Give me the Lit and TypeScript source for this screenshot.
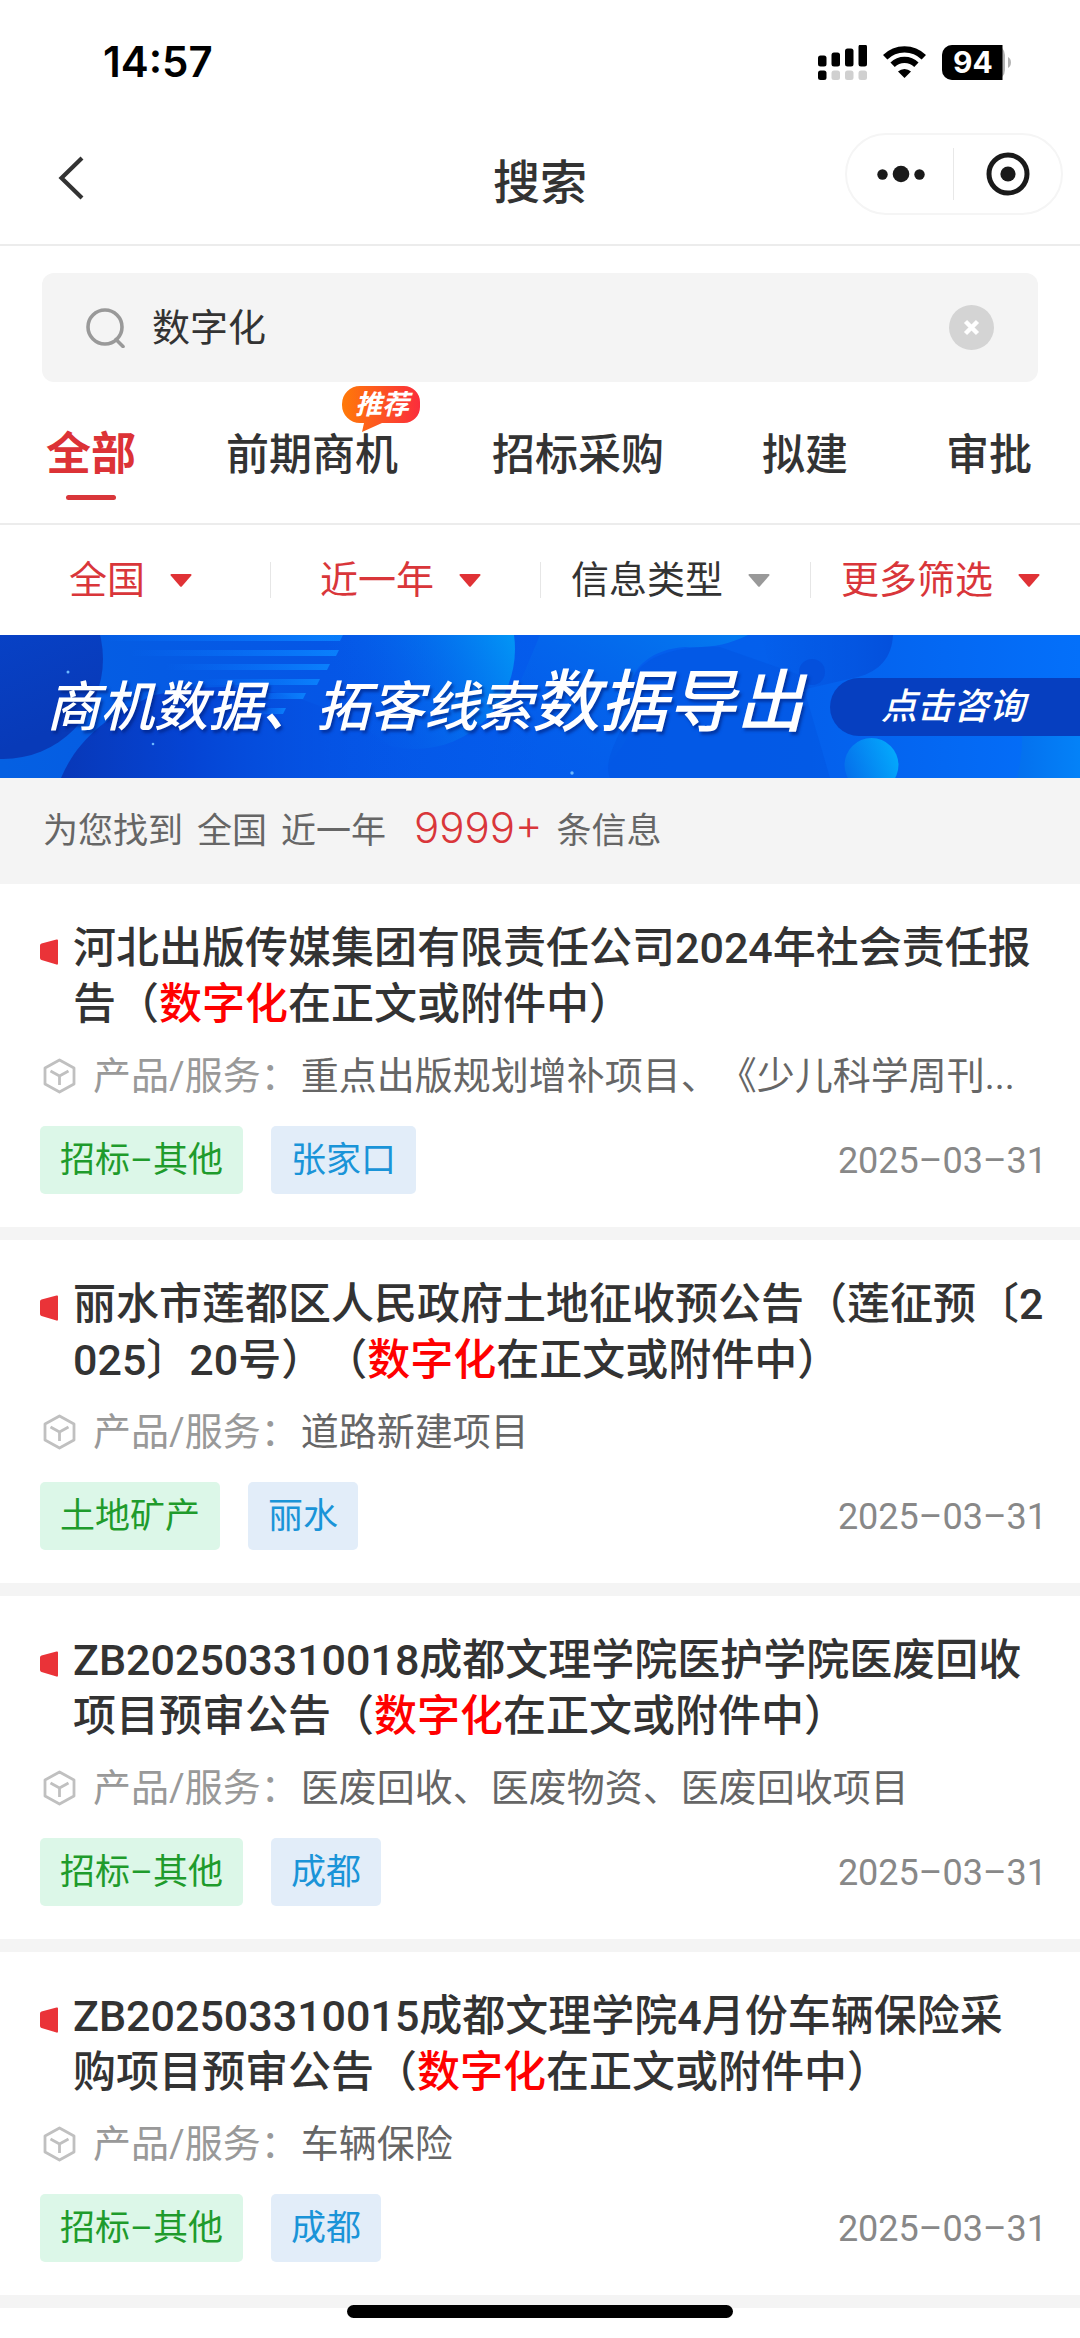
import { LitElement, html, css, svg } from "lit";
import { customElement, property } from "lit/decorators.js";
import { classMap } from "lit/directives/class-map.js";

interface Notice {
  title: string;
  product: string;
  kind: string;
  place: string;
  date: string;
}

const KEYWORD = "数字化";

const TABS = [
  { label: "全部", active: true },
  { label: "前期商机", badge: "推荐" },
  { label: "招标采购" },
  { label: "拟建" },
  { label: "审批" },
];

const FILTERS = [
  { label: "全国", set: true },
  { label: "近一年", set: true },
  { label: "信息类型", set: false },
  { label: "更多筛选", set: true },
];

const NOTICES: Notice[] = [
  {
    title: "河北出版传媒集团有限责任公司2024年社会责任报告",
    product: "重点出版规划增补项目、《少儿科学周刊...",
    kind: "招标–其他",
    place: "张家口",
    date: "2025–03–31",
  },
  {
    title: "丽水市莲都区人民政府土地征收预公告（莲征预〔2025〕20号）",
    product: "道路新建项目",
    kind: "土地矿产",
    place: "丽水",
    date: "2025–03–31",
  },
  {
    title: "ZB202503310018成都文理学院医护学院医废回收项目预审公告",
    product: "医废回收、医废物资、医废回收项目",
    kind: "招标–其他",
    place: "成都",
    date: "2025–03–31",
  },
  {
    title: "ZB202503310015成都文理学院4月份车辆保险采购项目预审公告",
    product: "车辆保险",
    kind: "招标–其他",
    place: "成都",
    date: "2025–03–31",
  },
];

@customElement("status-bar")
class StatusBar extends LitElement {
  static styles = css`
    :host { display: block; }
    .bar {
      display: flex;
      align-items: center;
      justify-content: space-between;
      height: 84px;
      padding: 20px 69px 0 103px;
      color: #000;
    }
    .time { font: 600 42px/48px Inter, sans-serif; }
    .icons { display: flex; align-items: center; gap: 16px; }
    .level { font: 700 30px Inter, sans-serif; }
  `;

  render() {
    const bars = [11, 14, 18, 22];
    return html`
      <div class="bar">
        <span class="time">14:57</span>
        <div class="icons">
          <svg width="49" height="35" viewBox="0 0 49 35" aria-hidden="true">
            ${bars.map((h, i) => svg`
              <rect x=${i * 13.5} y=${21.5 - h} width="8.5" height=${h} rx="2.5" />
              <rect x=${i * 13.5} y="25.5" width="8.5" height="9.5" rx="2.5" fill=${i ? "#d0d0d0" : "#000"} />`)}
          </svg>
          <svg width="43" height="32" viewBox="0 0 43 32" aria-hidden="true">
            <g fill="none" stroke="#000" stroke-width="6.2">
              <path d="M2.2 11.2 A27.5 27.5 0 0 1 40.8 11.2" />
              <path d="M9.6 18.8 A17 17 0 0 1 33.4 18.8" />
            </g>
            <path d="M21.5 32 L15 25.6 A9.4 9.4 0 0 1 28 25.6 Z" />
          </svg>
          <svg width="69" height="35" viewBox="0 0 69 35" aria-hidden="true">
            <rect width="63" height="35" rx="10" fill="#b4b4b4" />
            <path d="M10 0H60.500V35H10A10 10 0 0 1 0 25V10A10 10 0 0 1 10 0Z" />
            <path d="M66 12C70 14 70 21 66 23Z" fill="#b4b4b4" />
            <text class="level" x="31" y="28" text-anchor="middle" fill="#fff">94</text>
          </svg>
        </div>
      </div>
    `;
  }
}

@customElement("nav-header")
class NavHeader extends LitElement {
  static styles = css`
    :host { display: block; }
    .head {
      display: grid;
      grid-template-columns: 1fr auto 1fr;
      align-items: center;
      height: 140px;
      padding: 0 17px;
      border-bottom: 2px solid #ececec;
    }
    button {
      display: grid;
      place-items: center;
      margin: 0;
      padding: 0;
      border: 0;
      background: none;
    }
    .back { width: 48px; height: 60px; margin-left: 30px; padding-top: 8px; }
    h1 {
      margin: 0;
      padding-top: 18px;
      color: #333;
      font-size: 47px;
      font-weight: 500;
      line-height: 60px;
    }
    .capsule {
      display: grid;
      grid-template-columns: 1fr 1fr;
      justify-self: end;
      box-sizing: border-box;
      width: 218px;
      height: 82px;
      border: 2px solid #f5f5f5;
      border-radius: 41px;
    }
    .more { background: linear-gradient(#e8e8e8, #e8e8e8) right center / 1px 52px no-repeat; }
  `;

  render() {
    return html`
      <header class="head">
        <button class="back" aria-label="返回">
          <svg width="26" height="44" viewBox="0 0 26 44">
            <path d="M24 2 L3.500 22 L24 42" fill="none" stroke="#333" stroke-width="4.200" />
          </svg>
        </button>
        <h1>搜索</h1>
        <div class="capsule">
          <button class="more" aria-label="更多">
            <svg width="48" height="18" viewBox="0 0 48 18" fill="#1a1a1a">
              <circle cx="5.500" cy="9.500" r="5.200" />
              <circle cx="24" cy="9" r="8.300" />
              <circle cx="42.500" cy="9.500" r="5.200" />
            </svg>
          </button>
          <button aria-label="关闭">
            <svg width="44" height="44" viewBox="0 0 44 44">
              <circle cx="22" cy="22" r="19" fill="none" stroke="#1a1a1a" stroke-width="5" />
              <circle cx="22" cy="22" r="7.600" fill="#1a1a1a" />
            </svg>
          </button>
        </div>
      </header>
    `;
  }
}

@customElement("search-box")
class SearchBox extends LitElement {
  static styles = css`
    :host { display: block; }
    .box {
      display: flex;
      align-items: center;
      height: 109px;
      margin: 27px 42px 0;
      padding: 0 44px 0 43px;
      box-sizing: border-box;
      border-radius: 12px;
      background: #f4f4f4;
    }
    .field { display: flex; flex: 1; align-items: center; gap: 27px; }
    input {
      flex: 1;
      min-width: 0;
      padding: 0;
      border: 0;
      outline: 0;
      background: none;
      color: #333;
      font-family: inherit;
      font-size: 38px;
      line-height: 56px;
    }
    .clear { display: grid; padding: 0; border: 0; background: none; }
  `;

  render() {
    return html`
      <div class="box" role="search">
        <label class="field">
          <svg width="40" height="40" viewBox="0 0 40 40" fill="none" stroke="#999" stroke-width="3.600" aria-hidden="true">
            <circle cx="20" cy="19" r="17" />
            <path d="M31 31.500 L38 38.500" stroke-linecap="round" />
          </svg>
          <input type="text" aria-label="搜索关键词" .value=${KEYWORD} />
        </label>
        <button class="clear" aria-label="清除">
          <svg width="45" height="45" viewBox="0 0 45 45">
            <circle cx="22.500" cy="22.500" r="22.500" fill="#d4d4d4" />
            <path d="M16.500 16.500 L28.500 28.500 M28.500 16.500 L16.500 28.500" stroke="#fff" stroke-width="4.400" />
          </svg>
        </button>
      </div>
    `;
  }
}

@customElement("category-tabs")
class CategoryTabs extends LitElement {
  static styles = css`
    :host { display: block; }
    .tabs {
      display: grid;
      grid-template-columns: 180fr 266fr 270fr 184fr 86fr;
      padding: 43px 48px 0 46px;
      height: 98px;
      border-bottom: 2px solid #ececec;
    }
    .tab {
      position: relative;
      justify-self: start;
      align-self: start;
      padding: 0;
      border: 0;
      background: none;
      color: #333;
      font-family: inherit;
      font-size: 43px;
      font-weight: 500;
      line-height: 60px;
      white-space: nowrap;
    }
    .active { color: #dc3236; font-size: 45px; font-weight: 700; }
    .line {
      display: block;
      width: 50px;
      height: 5px;
      margin: 10px auto 0;
      border-radius: 3px;
      background: #d9363a;
    }
    .badge { position: absolute; top: -39px; right: -22px; display: block; }
    .hint { font: italic 700 27px Roboto, "Noto Sans CJK SC", sans-serif; }
  `;

  render() {
    return html`
      <nav class="tabs">
        ${TABS.map((t) => html`
          <button class=${classMap({ tab: true, active: !!t.active })}>
            ${t.label}
            ${t.active ? html`<span class="line"></span>` : ""}
            ${t.badge ? html`
              <svg class="badge" width="78" height="46" viewBox="0 0 78 46">
                <defs>
                  <linearGradient id="warm">
                    <stop offset="0" stop-color="#ff7a08" />
                    <stop offset="1" stop-color="#fb2d3c" />
                  </linearGradient>
                </defs>
                <path fill="url(#warm)" d="M18 0H62A16 16 0 0 1 78 16V21A16 16 0 0 1 62 37H40L20 46L22 37H18A18 18 0 0 1 0 19V18A18 18 0 0 1 18 0Z" />
                <text class="hint" x="40" y="28" text-anchor="middle" fill="#fff">${t.badge}</text>
              </svg>` : ""}
          </button>`)}
      </nav>
    `;
  }
}

@customElement("filter-row")
class FilterRow extends LitElement {
  static styles = css`
    :host { display: block; }
    .row { display: grid; grid-template-columns: repeat(4, 1fr); height: 110px; }
    button {
      display: flex;
      align-items: center;
      justify-content: center;
      gap: 25px;
      padding: 0 9px 0 0;
      border: 0;
      background: none;
      color: #333;
      font-family: inherit;
      font-size: 38px;
      line-height: 56px;
      white-space: nowrap;
    }
    button + button { background: linear-gradient(#e6e6e6, #e6e6e6) left center / 1px 36px no-repeat; }
    .arrow { fill: #999; }
    .set { color: #d9363a; }
    .set .arrow { fill: #e03236; }
  `;

  render() {
    return html`
      <div class="row">
        ${FILTERS.map((f) => html`
          <button class=${classMap({ set: f.set })}>
            <span>${f.label}</span>
            <svg class="arrow" width="22" height="13" viewBox="0 0 22 13" aria-hidden="true">
              <path d="M1.500 0H20.500Q22 0 21.300 1.500L12 12.200Q11 13.200 10 12.200L0.700 1.500Q0 0 1.500 0Z" />
            </svg>
          </button>`)}
      </div>
    `;
  }
}

@customElement("promo-banner")
class PromoBanner extends LitElement {
  static styles = css`
    :host { display: block; }
    .banner {
      position: relative;
      display: flex;
      align-items: center;
      justify-content: space-between;
      height: 143px;
      padding-left: 46px;
      overflow: hidden;
      background: #045be6;
      color: #fff;
      font-style: italic;
      text-decoration: none;
      white-space: nowrap;
    }
    .art { position: absolute; inset: 0; width: 100%; height: 100%; }
    .copy {
      position: relative;
      padding-bottom: 2px;
      font-size: 54px;
      font-weight: 500;
      line-height: 80px;
      text-shadow: 2px 3px 3px rgba(0, 30, 120, 0.6);
    }
    .big { font-size: 68px; }
    .cta {
      position: relative;
      box-sizing: border-box;
      width: 250px;
      padding-left: 51px;
      border-radius: 29px 0 0 29px;
      background: #063fc0;
      font-size: 36px;
      font-weight: 500;
      line-height: 58px;
    }
  `;

  render() {
    const stripes = [
      [103, 343, 0], [129, 339, 15], [165, 330, 29], [201, 320, 44], [243, 306, 58], [258, 286, 73],
    ];
    return html`
      <a class="banner" href="#consult">
        <svg class="art" viewBox="0 0 1080 143" preserveAspectRatio="none" aria-hidden="true">
          <defs>
            <linearGradient id="base">
              <stop offset="0" stop-color="#0560e2" />
              <stop offset="0.3" stop-color="#0556e6" />
              <stop offset="0.5" stop-color="#045cec" />
              <stop offset="0.75" stop-color="#0460ec" />
              <stop offset="1" stop-color="#0470fa" />
            </linearGradient>
            <linearGradient id="disc" x1="0" y1="0" x2="0.4" y2="1">
              <stop offset="0" stop-color="#0748d2" />
              <stop offset="1" stop-color="#083ab8" />
            </linearGradient>
            <linearGradient id="hill">
              <stop offset="0" stop-color="#0838b8" />
              <stop offset="0.35" stop-color="#0544d4" />
              <stop offset="1" stop-color="#0556ea" stop-opacity="0" />
            </linearGradient>
            <linearGradient id="stripe">
              <stop offset="0" stop-color="#0a78ff" stop-opacity="0" />
              <stop offset="1" stop-color="#0a80fc" />
            </linearGradient>
            <linearGradient id="ball" x1="0.2" y1="0.8" x2="1" y2="0.4">
              <stop offset="0" stop-color="#0560ea" stop-opacity="0" />
              <stop offset="1" stop-color="#0298f6" />
            </linearGradient>
            <linearGradient id="cloud" x1="0" y1="0.9" x2="1" y2="0">
              <stop offset="0" stop-color="#0458e4" stop-opacity="0" />
              <stop offset="1" stop-color="#0488f2" />
            </linearGradient>
            <linearGradient id="shade">
              <stop offset="0" stop-color="#0450dc" stop-opacity="0" />
              <stop offset="1" stop-color="#0450dc" />
            </linearGradient>
            <linearGradient id="pearl" x1="0" y1="0.8" x2="1" y2="0.4">
              <stop offset="0" stop-color="#056cea" />
              <stop offset="1" stop-color="#04a8fc" />
            </linearGradient>
            <linearGradient id="edge">
              <stop offset="0" stop-color="#0470ee" />
              <stop offset="1" stop-color="#0482f8" />
            </linearGradient>
          </defs>
          <rect width="1080" height="143" fill="url(#base)" />
          <circle cx="3" cy="24" r="100" fill="url(#disc)" />
          <path d="M61 143C74 112 100 82 155 60C250 38 340 60 430 143Z" fill="url(#hill)" />
          ${stripes.map(([a, b, y]) => svg`
            <path d="M${a} ${y}H${b}L${b - 3} ${y + 6}H${a}Z" fill="url(#stripe)" />`)}
          <circle cx="415" cy="14" r="100" fill="url(#ball)" />
          <path d="M540 0H748C728 10 710 13 685 12C650 14 626 36 632 60C640 90 620 125 590 143H480Z" fill="url(#cloud)" opacity="0.700" />
          <path d="M610 143C600 120 632 90 628 60C630 30 660 10 720 12L800 40L830 143Z" fill="#0450dc" opacity="0.350" />
          <path d="M760 0H893C892 22 880 36 858 42L780 60Z" fill="url(#shade)" />
          <circle cx="812" cy="37" r="13" fill="#0450dc" />
          <path d="M1022 96H1080V143H1017Q1023 120 1022 96Z" fill="url(#edge)" />
          <circle cx="871.500" cy="130" r="27" fill="url(#pearl)" />
          <g fill="#6cb8ff">
            <circle cx="68" cy="37" r="1.500" />
            <circle cx="153" cy="109" r="1.300" />
            <circle cx="572" cy="138" r="1.700" />
          </g>
        </svg>
        <span class="copy">商机数据、拓客线索<span class="big">数据导出</span></span>
        <span class="cta">点击咨询</span>
      </a>
    `;
  }
}

@customElement("notice-card")
class NoticeCard extends LitElement {
  @property({ attribute: false }) notice!: Notice;

  static styles = css`
    :host { display: block; }
    .card { padding: 36px 33px 33px 40px; background: #fff; }
    .head { display: flex; gap: 15px; padding-right: 3px; }
    .flag { flex: none; margin-top: 19px; }
    h2 {
      flex: 1;
      margin: 0;
      color: #333;
      font-size: 43px;
      font-weight: 500;
      line-height: 56px;
      text-spacing-trim: space-all;
      word-break: break-all;
      line-break: anywhere;
    }
    .hit { color: #f00; }
    .product {
      display: flex;
      align-items: center;
      margin-top: 16px;
      padding-left: 3px;
      color: #999;
      font-size: 38px;
      line-height: 56px;
      white-space: nowrap;
      text-spacing-trim: space-all;
    }
    .cube { margin-right: 17px; }
    .value { color: #666; margin-left: 2px; }
    .foot {
      display: flex;
      align-items: center;
      gap: 28px;
      margin-top: 22px;
      font-size: 35px;
      line-height: 66px;
    }
    .tag { padding: 2px 20px 0; border-radius: 5px; }
    .kind { background: #dcf7e8; color: #1f9b2c; }
    .place { background: #e2edf9; color: #1a94d8; }
    time { margin-left: auto; padding-top: 2px; color: #888; font-size: 36px; }
  `;

  render() {
    const n = this.notice;
    return html`
      <article class="card">
        <div class="head">
          <svg class="flag" width="18" height="26" viewBox="0 0 18 26" aria-hidden="true">
            <path d="M1.500 4.500L16.500 0.500Q18 0 18 1.500V24.500Q18 26 16.500 25.500L1.500 21Q0 20.500 0 19V6.500Q0 5 1.500 4.500Z" fill="#ea3338" />
          </svg>
          <h2>${n.title}（<span class="hit">${KEYWORD}</span>在正文或附件中）</h2>
        </div>
        <div class="product">
          <svg class="cube" width="33" height="36" viewBox="0 0 33 36" fill="none" stroke="#c0c0c0" stroke-width="2.800" stroke-linejoin="round" aria-hidden="true">
            <path d="M16.500 2L31 10V26L16.500 34L2 26V10Z" />
            <path d="M7.500 13L16.500 18L25.500 13M16.500 18V27" />
          </svg>
          <span>产品/服务：</span>
          <span class="value">${n.product}</span>
        </div>
        <div class="foot">
          <span class="tag kind">${n.kind}</span>
          <span class="tag place">${n.place}</span>
          <time>${n.date}</time>
        </div>
      </article>
    `;
  }
}

@customElement("app-root")
class AppRoot extends LitElement {
  static styles = css`
    :host {
      display: block;
      min-height: 100vh;
      background: #fff;
      font-family: Roboto, "Noto Sans CJK SC", sans-serif;
    }
    .summary {
      display: flex;
      align-items: baseline;
      gap: 14px;
      height: 106px;
      margin: 0;
      padding-left: 43px;
      box-sizing: border-box;
      background: #f4f4f4;
      color: #666;
      font-size: 35px;
      line-height: 100px;
      white-space: nowrap;
    }
    .count { margin-left: 14px; color: #d9363a; font-family: Inter, sans-serif; font-size: 42px; font-weight: 300; }
    .list { display: grid; gap: 13px; padding-bottom: 13px; background: #f4f4f4; }
    .home {
      position: fixed;
      bottom: 20px;
      left: 0;
      right: 0;
      width: 386px;
      height: 13px;
      margin: 0 auto;
      border-radius: 7px;
      background: #000;
    }
  `;

  render() {
    return html`
      <status-bar></status-bar>
      <nav-header></nav-header>
      <search-box></search-box>
      <category-tabs></category-tabs>
      <filter-row></filter-row>
      <promo-banner></promo-banner>
      <p class="summary">
        <span>为您找到</span><span>全国</span><span>近一年</span>
        <span class="count">9999+</span><span>条信息</span>
      </p>
      <main class="list">
        ${NOTICES.map((n) => html`<notice-card .notice=${n}></notice-card>`)}
      </main>
      <div class="home"></div>
    `;
  }
}
